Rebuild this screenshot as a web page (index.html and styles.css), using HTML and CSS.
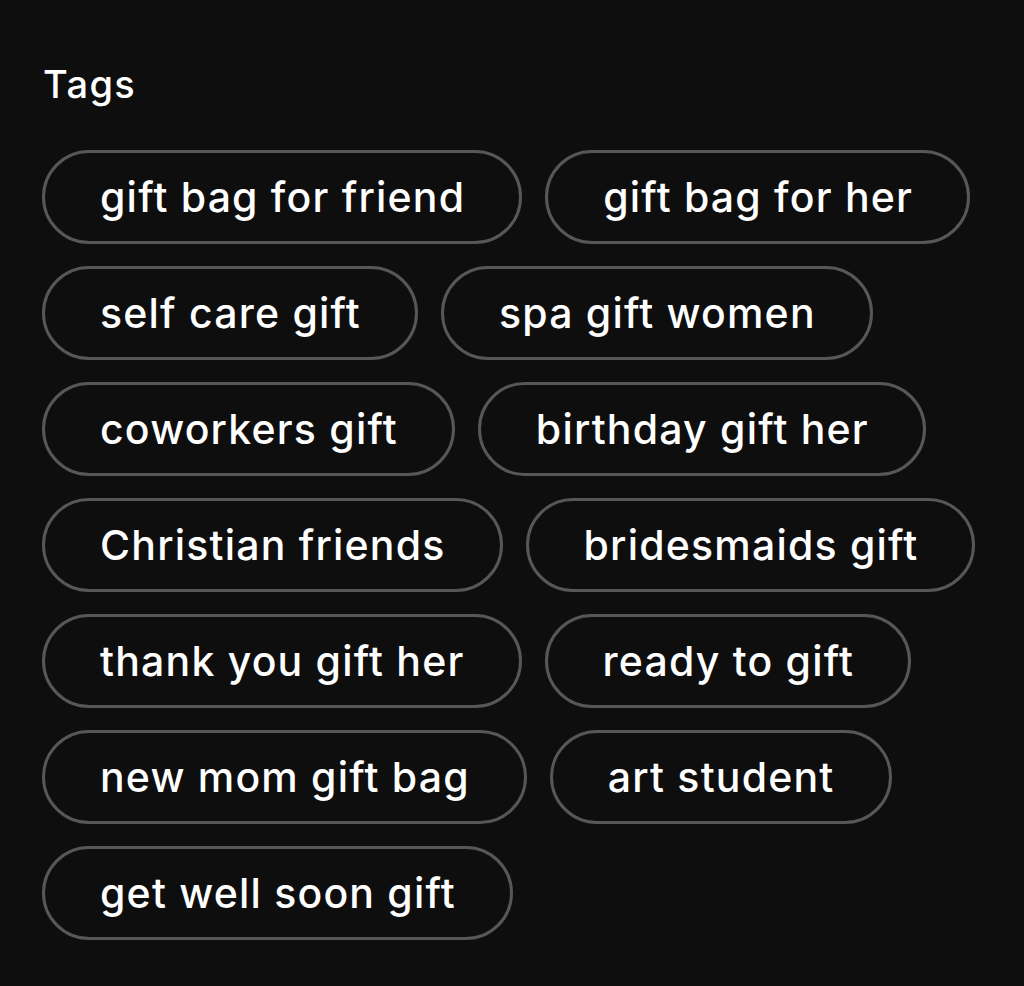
FILE: index.html
```html
<!DOCTYPE html>
<html lang="en">
<head>
<meta charset="utf-8">
<title>Tags</title>
<link rel="stylesheet" href="styles.css">
</head>
<body>
<section class="tags">
  <h2 class="tags-title">Tags</h2>
  <ul class="tag-list">
    <li><a class="tag" href="#">gift bag for friend</a></li>
    <li><a class="tag" href="#">gift bag for her</a></li>
    <li><a class="tag" href="#">self care gift</a></li>
    <li><a class="tag" href="#">spa gift women</a></li>
    <li><a class="tag" href="#">coworkers gift</a></li>
    <li><a class="tag" href="#">birthday gift her</a></li>
    <li><a class="tag" href="#">Christian friends</a></li>
    <li><a class="tag" href="#">bridesmaids gift</a></li>
    <li><a class="tag" href="#">thank you gift her</a></li>
    <li><a class="tag" href="#">ready to gift</a></li>
    <li><a class="tag" href="#">new mom gift bag</a></li>
    <li><a class="tag" href="#">art student</a></li>
    <li><a class="tag" href="#">get well soon gift</a></li>
  </ul>
</section>
</body>
</html>
```

FILE: styles.css
```css
html, body {
  margin: 0;
  padding: 0;
  background: #0e0e0e;
}
body {
  font-family: Inter, "Liberation Sans", Arial, sans-serif;
  color: #ffffff;
  min-height: 986px;
}
.tags {
  padding: 60px 24px 0 42px;
}
.tags-title {
  margin: 0 0 0 1px;
  font-size: 38px;
  font-weight: 500;
  letter-spacing: 1.4px;
  line-height: 48px;
}
.tag-list {
  list-style: none;
  margin: 42px 0 0 0;
  padding: 0;
  display: flex;
  flex-wrap: wrap;
  column-gap: 23px;
  row-gap: 22px;
}
.tag {
  display: flex;
  align-items: center;
  box-sizing: border-box;
  height: 94px;
  padding: 0 54px 0 55px;
  border: 3px solid #575757;
  border-radius: 47px;
  color: #ffffff;
  text-decoration: none;
  font-size: 41px;
  font-weight: 500;
  letter-spacing: 1.2px;
  white-space: nowrap;
}
```
